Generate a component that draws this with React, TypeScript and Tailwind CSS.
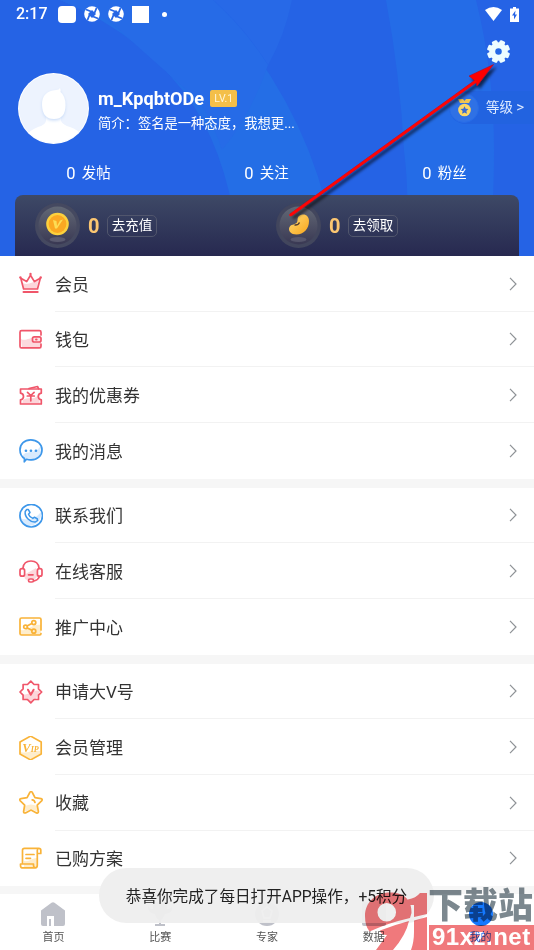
import type { ReactNode } from "react";

const RED = "#f0566a";
const BLUE = "#3d97ea";
const GOLD = "#f9b338";

function Icon({ color, children }: { color: string; children: ReactNode }) {
  return (
    <svg
      className="w-6 h-6 shrink-0"
      viewBox="0 0 24 24"
      fill="none"
      stroke={color}
      strokeWidth={1.7}
      strokeLinecap="round"
      strokeLinejoin="round"
    >
      {children}
    </svg>
  );
}

const CrownIcon = () => (
  <Icon color={RED}>
    <path d="M5 17 4 11c5 3 10-2 15-2l-1 8Z" fill="#fcd5da" stroke="none" />
    <path d="M4.600 17 1.800 6.300 7.700 9.600 11.500 3.300l3.900 6.300 5.900-3.300L18.500 17Z" />
    <path d="M4.500 20h14.200" strokeWidth="2" />
    <circle cx="11.500" cy="2" r="1.200" fill={RED} stroke="none" />
    <circle cx="1.400" cy="5.500" r="1.200" fill={RED} stroke="none" />
    <circle cx="21.700" cy="5.500" r="1.200" fill={RED} stroke="none" />
  </Icon>
);

const WalletIcon = () => (
  <Icon color={RED}>
    <path d="M2 11c5 3 9-3 20-1v9q0 1-2 1H3Z" fill="#fcd9dd" stroke="none" />
    <path d="M22 7V4.200q0-1.500-1.500-1.500h-18Q1 2.700 1 4.200v14q0 1.700 1.500 1.700h18q1.500 0 1.500-1.700V16" />
    <rect x="13.500" y="8.800" width="8.500" height="5.200" rx="1.800" fill="#fce4e7" />
    <path d="M17 11.400h.6" strokeWidth="2" />
  </Icon>
);

const CouponIcon = () => (
  <Icon color={RED}>
    <path d="M4 16c6-4 11 1 15-5l2 9H3Z" fill="#fcd5da" stroke="none" />
    <path d="M1.500 5h20.800v4.200q-3 .5-3 3.300t3 3.300V20H1.500v-4.200q3-.5 3-3.300t-3-3.300Z" />
    <path d="m10 4.500 8.500-2 1.200 2.300M8.500 8.300l3.300 3.200 3.300-3.200M11.800 11.500v5.300M8.300 12h7" />
  </Icon>
);

const MessageIcon = () => (
  <Icon color={BLUE}>
    <path d="M4 17c1-6 11-1 17-9 3 12-6 16-13 13Z" fill="#d8eafd" stroke="none" />
    <path d="M5.500 19.500Q1 16.500 1 10.900C1 5 5.500.900 11.700.900S23 5 23 10.900s-5 10-11 10c-2 0-3-.2-4.500-.6L5.300 22.800Z" />
    <path d="M6.900 11.700h.1M11.900 11.700h.1M16.900 11.700h.1" strokeWidth="2.600" />
  </Icon>
);

const PhoneIcon = () => (
  <Icon color={BLUE}>
    <path d="M2 15c6 0 12 3 20-7 2 12-15 20-20 7Z" fill="#d8eafd" stroke="none" />
    <circle cx="12.200" cy="11.700" r="11.300" />
    <path
      d="M7.700 5.500 6.200 7.500c-.8 5.500 5 11 10.200 10.500l2.200-1.500-.2-1.500-2.900-1.800-1.700 1.200c-1.800-.6-3.700-2.500-4.300-4.200L11 8.500 9.200 5.400Z"
      strokeWidth="1.500"
    />
  </Icon>
);

const HeadsetIcon = () => (
  <Icon color={RED}>
    <path d="M5 15 17 8l2 8-6 6-7-3Z" fill="#fcd9dd" stroke="none" />
    <path d="M4 8C4.500 3.500 7.700 1 12 1s7.500 2.500 8 7M20.500 16.500c-1 2.500-3 4-5.500 4.500" />
    <rect x="1" y="8.700" width="4.600" height="7.500" rx="2" fill="white" />
    <rect x="18.400" y="8.700" width="4.600" height="7.500" rx="2" fill="white" />
    <rect x="9.500" y="19" width="5" height="3" rx="1.500" fill="white" />
    <path d="M9.500 14.800h4.500" />
  </Icon>
);

const ShareIcon = () => (
  <Icon color={GOLD}>
    <path d="M2 15c6 2 12-7 20-5v10H2Z" fill="#feedcc" stroke="none" />
    <path d="M22 15V4.500Q22 3 20.500 3h-18Q1 3 1 4.500v14Q1 20 2.500 20h18.200q1.300 0 1.300-1.500M12.800 8.500 8.500 10.800m0 2.200 4.300 2.300" />
    <circle cx="6.500" cy="11.900" r="1.800" />
    <circle cx="14.800" cy="7.600" r="2" />
    <circle cx="14.800" cy="16.200" r="2" />
  </Icon>
);

const VBadgeIcon = () => (
  <Icon color={RED}>
    <path d="M3 14c5 3 11-6 18-3l-4 8-6 3-6-3Z" fill="#fcd5da" stroke="none" />
    <path d="m11.800 1.200 3.300 3.300h4.400v4.400l3.200 3.100-3.200 3.100v4.400h-4.400l-3.300 3.300-3.300-3.300H4.100v-4.400L1 12l3.100-3.100V4.500h4.400Z" />
    <path d="m9 9.700 2.800 5 2.800-5" strokeWidth="2" />
  </Icon>
);

const VipIcon = () => (
  <Icon color={GOLD}>
    <path d="M2 16c5 2 12-2 19-1v3l-9 5-10-5Z" fill="#feedcc" stroke="none" />
    <path d="M11.600.1 22.200 6v12L11.600 23.900 1 18V6Z" />
    <text
      x="3.300"
      y="16.300"
      fill={GOLD}
      stroke="none"
      fontFamily="Liberation Serif, serif"
      fontSize="12.500"
      fontStyle="italic"
      fontWeight="bold"
    >
      V<tspan fontSize="8">IP</tspan>
    </text>
  </Icon>
);

const StarIcon = () => (
  <Icon color={GOLD}>
    <path d="M6 15q6-3 12 0l1 6-7-3-7 3Z" fill="#feedcc" stroke="none" />
    <path d="M10.800 1.500q1.300-2 2.500 0l2.700 5.200 6 .9q2 .6.600 2.300L18.200 14.200l1.200 6.300q0 2-1.900 1.400L12 19.100l-5.500 2.800q-2 .5-1.900-1.400l1.100-6.300L1.300 9.900Q-.100 8.200 2 7.600l6.100-.900Z" />
    <path d="M13.200 8.800q2.300.3 2.800 2.700" />
  </Icon>
);

const ScrollIcon = () => (
  <Icon color={GOLD}>
    <path d="M5 14c5 1 8-3 13-3v9H5Z" fill="#feedcc" stroke="none" />
    <path d="M3.500 16.700V3.300q0-2 2-2h14.300q2 0 2 2v3.200h-3.300M18.300 3.300v15q0 2.500-2 2.500H3q-1.500 0-1.500-2.600V17h13v1.300q0 2.300 2 2.500M18.300 3.300q.2-2 1.500-2M7 7.500h8M7 11.300h4.500" />
  </Icon>
);

type MenuItem = { label: string; icon: () => ReactNode };

const menuGroups: MenuItem[][] = [
  [
    { label: "会员", icon: CrownIcon },
    { label: "钱包", icon: WalletIcon },
    { label: "我的优惠券", icon: CouponIcon },
    { label: "我的消息", icon: MessageIcon },
  ],
  [
    { label: "联系我们", icon: PhoneIcon },
    { label: "在线客服", icon: HeadsetIcon },
    { label: "推广中心", icon: ShareIcon },
  ],
  [
    { label: "申请大V号", icon: VBadgeIcon },
    { label: "会员管理", icon: VipIcon },
    { label: "收藏", icon: StarIcon },
    { label: "已购方案", icon: ScrollIcon },
  ],
];

const stats = ["发帖", "关注", "粉丝"];

function HeaderBackdrop() {
  return (
    <svg className="absolute inset-0 w-full h-full" viewBox="0 0 534 256" fill="none">
      <path d="M60 0q90 38 135 108 35 55 45 148h95Q320 120 213 0Z" fill="#246ee6" />
      <path d="M213 0h79q-7 35-24 65Q245 28 213 0Z" fill="#2769e7" />
      <path d="M268 65q-17 50-46 85-8-25-22-48L108 20 60 0h153q33 30 55 65Z" fill="#266be7" />
      <path d="M386 0h90q18 72 18 150 0 60-6 106h-85q8-50 1-106-4-75-18-150Z" fill="#246ce7" />
    </svg>
  );
}

// Aperture-like notification glyph
function ApertureIcon() {
  return (
    <svg className="w-4 h-4" viewBox="0 0 16 16">
      <circle cx="8" cy="8" r="7.800" fill="white" />
      <path d="m8 4 4 4-4 4-4-4Z" fill="#2766e5" />
      <path d="M2 3.500 7 5.500M12.500 2l-2 5M14 12.500l-5-2M3.500 14l2-5" stroke="#2766e5" strokeWidth="1.800" />
    </svg>
  );
}

function StatusBar() {
  return (
    <div className="flex items-center h-7 pl-4 pr-[15px] text-white">
      <span className="w-[42px] font-[Roboto,sans-serif] text-base font-medium leading-none">2:17</span>
      <span className="w-[18px] h-[17px] rounded-[4px] bg-white" />
      <span className="ml-2">
        <ApertureIcon />
      </span>
      <span className="ml-2">
        <ApertureIcon />
      </span>
      <span className="ml-2 w-[17px] h-[17px] bg-white" />
      <span className="ml-[13px] w-[5px] h-[5px] rounded-full bg-white" />
      <svg className="ml-auto w-[17px] h-[14px]" viewBox="0 0 17 14" fill="white">
        <path d="M0 3Q8.500-3 17 3L8.500 14Z" />
      </svg>
      <svg className="ml-2 w-[9px] h-[15px]" viewBox="0 0 9 15">
        <path d="M3 0h3v1.500h3V15H0V1.500h3Z" fill="white" />
        <path d="M5.500 3.500 2 8.500h2V12.500l3-5H5Z" fill="#2563e6" />
      </svg>
    </div>
  );
}

function Avatar() {
  return (
    <svg className="w-[71px] h-[71px] shrink-0" viewBox="0 0 71 71">
      <defs>
        <clipPath id="avatar">
          <circle cx="35.500" cy="35.500" r="34.500" />
        </clipPath>
        <filter id="headShadow" x="-30%" y="-30%" width="160%" height="160%">
          <feDropShadow dx="0" dy="1.500" stdDeviation="1.500" floodColor="#c9dcf8" />
        </filter>
      </defs>
      <circle cx="35.500" cy="35.500" r="35.500" fill="white" />
      <circle cx="35.500" cy="35.500" r="34.500" fill="#edf3fe" />
      <g clipPath="url(#avatar)" fill="white">
        <path d="M28 40h15v8q2 4 9 6 9 3 13 10v8H8v-9q4-6 12-9 7-2 8-6Z" />
        <path
          d="M24 32c0-10 5-14 14-15q3 0 4-2 1 2 .5 4 5 4 5 13 0 14-11.500 14T24 32Z"
          filter="url(#headShadow)"
        />
      </g>
    </svg>
  );
}

function SettingsIcon() {
  return (
    <svg className="w-[23px] h-[23px]" viewBox="0 0 24 24">
      <g fill="#edfdff">
        <circle cx="12" cy="12" r="9.600" />
        {[22.5, 67.5, 112.5, 157.5].map((angle) => (
          <rect key={angle} x="9" y="0" width="6" height="24" rx="1.500" transform={`rotate(${angle} 12 12)`} />
        ))}
      </g>
      <circle cx="12" cy="12" r="3.400" fill="#2469e6" />
    </svg>
  );
}

function LevelBadge() {
  return (
    <div className="absolute left-[449px] top-[91px] w-[85px] h-[33px] flex items-center rounded-l-full bg-[#2263e0] text-[#dce9ff]">
      <span className="w-[30px] h-[30px] rounded-full bg-[#2f71e5] border border-[#266be8] flex justify-center items-center">
        <svg className="w-[15px] h-[18px]" viewBox="0 0 15 18">
          <path d="M1 0h5l1.500 2L9 0h5l-2 4H3Z" fill="#f0c552" />
          <circle cx="7.500" cy="11" r="6.300" fill="#fbd765" />
          <path d="m7.500 7.200 1.200 2.500 2.700.4-2 1.900.5 2.700-2.400-1.300-2.400 1.300.5-2.700-2-1.900 2.700-.4Z" fill="#376bd3" />
        </svg>
      </span>
      <span className="ml-[7px] text-[13.500px] whitespace-nowrap">
        等级 <span className="font-[Roboto,sans-serif] text-[15px]">&gt;</span>
      </span>
    </div>
  );
}

function CoinIcon() {
  return (
    <svg className="w-[45px] h-[45px]" viewBox="0 0 45 45">
      <circle cx="22.500" cy="22.500" r="22.500" fill="#454960" />
      <circle cx="22.500" cy="22.500" r="19" fill="url(#disc)" />
      <ellipse cx="22.500" cy="36.500" rx="8" ry="2.500" fill="#5b5b70" />
      <circle cx="22.500" cy="21" r="11.300" fill="#fdd13d" />
      <circle cx="22.500" cy="21" r="8.900" fill="#fba822" />
      <path d="m18 17 3.500 1 .5 5 3-5.500 3-1-6 9h-2Z" fill="#fddd55" />
    </svg>
  );
}

function BeanIcon() {
  return (
    <svg className="w-[45px] h-[45px]" viewBox="0 0 45 45">
      <circle cx="22.500" cy="22.500" r="22.500" fill="#42465d" />
      <circle cx="22.500" cy="22.500" r="19" fill="url(#disc)" />
      <ellipse cx="22.500" cy="36.500" rx="8" ry="2.500" fill="#56566c" />
      <path
        d="M23 13C28 9.500 33 12.500 33 18c0 8-5.500 13.500-12.500 13.500-5.500 0-8.500-3.500-7.200-7 1.500-3.500 5-2.500 7.200-4.500C22.500 18 20.500 15 23 13Z"
        fill="url(#bean)"
      />
      <path d="M18.500 22q3.500.5 5-2.500" fill="none" stroke="#4d3930" strokeWidth="1.400" />
    </svg>
  );
}

function AssetCard({ icon, action }: { icon: ReactNode; action: string }) {
  return (
    <div className="w-[241px] flex items-center">
      {icon}
      <span className="ml-2 w-[12px] font-[Roboto,sans-serif] text-[20px] font-bold leading-none text-[#fbc671]">0</span>
      <span className="ml-[7px] w-[50px] h-[22px] rounded-[5px] border border-[#51566d] flex justify-center items-center text-[13.500px] text-white whitespace-nowrap">
        {action}
      </span>
    </div>
  );
}

function Header() {
  return (
    <header className="relative h-64 shrink-0 bg-[#2563e5] overflow-hidden">
      <HeaderBackdrop />
      <svg className="absolute w-0 h-0">
        <defs>
          <linearGradient id="disc" x1="0" y1="0" x2="0" y2="1">
            <stop stopColor="#626875" />
            <stop offset="1" stopColor="#393853" />
          </linearGradient>
          <linearGradient id="bean" x1="0" y1="0" x2="1" y2="1">
            <stop stopColor="#ffdc75" />
            <stop offset="1" stopColor="#f9a51b" />
          </linearGradient>
        </defs>
      </svg>
      <div className="relative h-full flex flex-col">
        <StatusBar />
        <div className="flex justify-end h-[45px] pt-3 pr-6">
          <SettingsIcon />
        </div>
        <div className="flex pl-[18px] h-[72px] text-white">
          <Avatar />
          <div className="ml-[9px] pt-[15px]">
            <div className="flex items-center h-[21px]">
              <span className="font-[Roboto,sans-serif] text-[18.150px] font-bold">m_KpqbtODe</span>
              <span className="ml-[6px] w-[27px] h-[17px] rounded-[2px] bg-[#f4bf49] flex items-center justify-center font-[Roboto,sans-serif] text-[10.500px] text-[#fff5d8]">
                LV.1
              </span>
            </div>
            <p className="mt-[5px] text-[13.300px] leading-5 whitespace-nowrap">简介：签名是一种态度，我想更...</p>
          </div>
        </div>
        <div className="grid grid-cols-3 h-[50px] pt-[18px] text-white">
          {stats.map((label) => (
            <div key={label} className="flex justify-center items-center h-[22px] pr-[1px]">
              <span className="font-[Roboto,sans-serif] text-[16.500px]">0</span>
              <span className="ml-[6px] text-[14.500px]">{label}</span>
            </div>
          ))}
        </div>
        <div className="flex-1 mx-[15px] pl-[20px] rounded-t-lg flex items-center bg-linear-to-b from-[#3e4966] to-[#272950]">
          <AssetCard icon={<CoinIcon />} action="去充值" />
          <AssetCard icon={<BeanIcon />} action="去领取" />
        </div>
      </div>
      <LevelBadge />
      {/* pointer to the settings gear */}
      <svg className="absolute inset-0 w-full h-full" viewBox="0 0 534 256">
        <defs>
          <filter id="arrowShadow" x="-20%" y="-20%" width="140%" height="140%">
            <feDropShadow dx="2.500" dy="3" stdDeviation="1.800" floodColor="#000" floodOpacity=".65" />
          </filter>
        </defs>
        <path
          d="M290 214 474.500 80.500 469 76 493.500 64.500 477 86 476 82.500 291.500 216Z"
          fill="#fe0505"
          stroke="#b30a18"
          strokeWidth=".5"
          filter="url(#arrowShadow)"
        />
        <path d="m290.500 215 185-133.500" stroke="#fe0505" strokeWidth="2.600" strokeLinecap="round" />
      </svg>
    </header>
  );
}

function MenuRow({ item, last }: { item: MenuItem; last: boolean }) {
  const ItemIcon = item.icon;
  return (
    <div className="flex h-[55.670px] pl-[19px]">
      <div className="flex items-center pt-px">
        <ItemIcon />
      </div>
      <div
        className={`ml-3 flex-1 flex items-center justify-between pr-[17px] pt-[4px] border-b ${last ? "border-transparent" : "border-[#f2f2f2]"}`}
      >
        <span className="text-[17px] text-[#333]">{item.label}</span>
        <svg className="w-2 h-[14px] mb-[3px]" viewBox="0 0 8 14" fill="none" stroke="#8e9296" strokeWidth="1.200">
          <path d="m1 .8 6 6.200-6 6.200" />
        </svg>
      </div>
    </div>
  );
}

const navItems = [
  {
    label: "首页",
    icon: (
      <>
        <path d="m10.500.700q1.500-1 3 0L24 8.500V22q0 2-2 2h-9v-10H6v10H2q-2 0-2-2V8.500Z" />
        <path d="M8 17h2v7H8Z" />
      </>
    ),
  },
  {
    label: "比赛",
    icon: <path d="M5 0h14v7q5 0 5-4 2 8-7 9-2 5-4 6v4h4v2H7v-2h4v-4q-3-1-4-6-8-1-7-9 1 4 5 4Z" />,
  },
  {
    label: "专家",
    icon: (
      <>
        <circle cx="12" cy="12" r="12" />
        <path d="m12 5 5 4-2 7H9L7 9ZM8 19h8" fill="none" stroke="white" strokeWidth="1.500" />
      </>
    ),
  },
  {
    label: "数据",
    icon: <path d="M2 0h20q2 0 2 2v20q0 2-2 2H2q-2 0-2-2V2q0-2 2-2Z" />,
  },
  {
    label: "我的",
    icon: <circle cx="12" cy="12" r="12" fill="#1478ff" />,
  },
];

function BottomNav() {
  return (
    <nav className="flex-1 grid grid-cols-5 bg-white">
      {navItems.map((item, i) => (
        <div key={item.label} className="flex flex-col items-center pt-2">
          <svg className="w-6 h-6" viewBox="0 0 24 24" fill="#bfc1c9">
            {item.icon}
          </svg>
          <span className={`mt-[4px] text-[11px] leading-4 ${i === 4 ? "text-[#2f6ff0]" : "text-[#555]"}`}>
            {item.label}
          </span>
        </div>
      ))}
    </nav>
  );
}

function SiteMark() {
  return (
    <div className="absolute left-[364px] top-[888px] w-[170px] h-[62px] mix-blend-multiply">
      <svg className="absolute inset-0 w-full h-full" viewBox="0 0 170 62">
        <g fill="#f0797c">
          {/* head of the 9 with its round counter */}
          <path
            fillRule="evenodd"
            d="M26 4.500C41 4.500 48 13 47.500 25L46 30Q24 35 5.500 43.500 1 38 1 28C1 14 12 4.500 26 4.500ZM22.700 15a9.300 9.300 0 1 0 .1 18.600A9.300 9.300 0 1 0 22.700 15Z"
          />
          <path d="M16 42.500Q30 37 45 33 42 47 29 62H12L23 47Q17 47 16 42.500Z" />
          <path d="M44 11.500Q52 10 56 5h7v21L50 29V17h-6ZM50 32.500 63 29v33H47Q50 54 50 44Z" />
          <path d="M65 37h105v25H65Z" />
        </g>
      </svg>
      <span className="absolute left-[64px] top-0 text-[35px] leading-[38px] font-black text-[#7c888f] whitespace-nowrap">
        下载站
      </span>
      <span className="absolute left-[68px] top-[37px] font-['Liberation_Sans',sans-serif] font-bold text-[24px] leading-6 tracking-[0.500px] text-white whitespace-nowrap">
        91xz.net
      </span>
    </div>
  );
}

export default function App() {
  return (
    <div className="relative w-[534px] h-[950px] overflow-hidden flex flex-col bg-white font-[Roboto,'Noto_Sans_CJK_SC',sans-serif]">
      <Header />
      {menuGroups.map((group, g) => (
        <section key={g} className="shrink-0">
          {group.map((item, i) => (
            <MenuRow key={item.label} item={item} last={i === group.length - 1} />
          ))}
          <div className={g === 2 ? "h-[7.600px] bg-[#f6f6f6]" : "h-[9px] bg-[#f6f6f6]"} />
        </section>
      ))}
      <BottomNav />
      <div className="absolute left-[99px] top-[868px] w-[335px] h-[55px] rounded-full bg-[#eeeeee]/95 flex items-center justify-center pt-[4px] text-[15.600px] text-[#222] whitespace-nowrap">
        恭喜你完成了每日打开APP操作，+5积分
      </div>
      <SiteMark />
    </div>
  );
}
